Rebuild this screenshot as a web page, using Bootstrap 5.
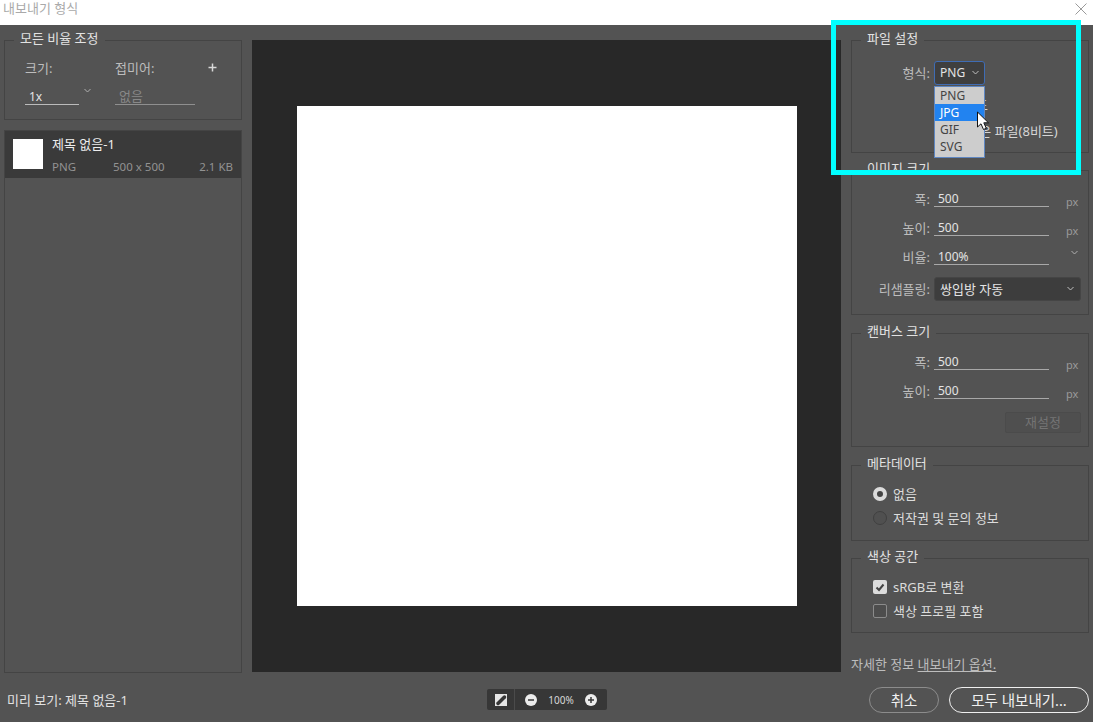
<!DOCTYPE html>
<html lang="ko">
<head>
<meta charset="utf-8">
<title>내보내기 형식</title>
<link href="https://cdn.jsdelivr.net/npm/bootstrap@5.3.0/dist/css/bootstrap.min.css" rel="stylesheet">
<style>
html,body{width:1093px;height:722px;overflow:hidden}
body{background:#535353;color:#d6d6d6;font-family:"Noto Sans","Noto Sans CJK KR",sans-serif;font-size:13px;line-height:18px}
.titlebar{height:25px;background:#fff;color:#a9a9a9;padding:0 3px;line-height:17px;font-size:13px}
.closex{margin:3px 3px 0 0}
.stage{position:relative;width:1093px;height:697px}
.mainrow{height:648px;padding:7px 4px 0}
.sidecol{width:238px;height:641px}
.viewport{width:589px;height:632px;margin:8px 10px 0;background:#282828}
.sheet{width:500px;height:500px;background:#fff}
.grp{border:1px solid #444;min-width:0}
.grp>legend{float:none;width:auto;font-size:13px;line-height:16px;padding:0 6px;margin:0 0 0 9px;color:#e2e2e2;position:relative;top:-2px}
.h-scale{height:88px}
.scale-body{padding-left:20px}
.h-file{height:121px}
.h-img{height:153px;margin-top:9px}
.h-canvas{height:122px;margin-top:10px}
.h-meta{height:84px;margin-top:10px}
.h-color{height:83px;margin-top:9px}
.flabel{width:78px;text-align:right;margin-right:4px;color:#bdbdbd;flex:none}
.frow{height:18px;margin-top:11px}
.frow .flabel{line-height:21px}
.fval{width:115px;border-bottom:1px solid #a8a8a8;padding-left:4px;color:#e4e4e4;height:18px;line-height:19px;flex:none;font-size:12px}
.funit{margin-left:17px;color:#9a9a9a;font-size:11px;position:relative;top:4px}
.chev{display:block;flex:none}
.chev-ratio{margin:3px 0 0 21px}
.selbox{width:147px;height:24px;background:#3d3d3d;border:1px solid #454545;border-radius:3px;padding:0 5px;color:#e4e4e4}
.fmt{width:51px;height:24px;background:#3f3f3f;border:1px solid #3f6cb4;border-radius:3px;padding:0 4px 0 5px;color:#e4e4e4;flex:none;font-size:12px}
.frow-top{margin-top:13px;height:24px}
.hidden-row{height:18px;margin:11px 0 0 100px;color:#d6d6d6}
.hidden-row+.hidden-row{margin-top:8px}
button.resetbtn:disabled{display:block;margin:13px 7px 0 auto;width:76px;height:21px;padding:0;line-height:19px;font-size:13px;background:#4f4f4f;border:1px solid #4b4b4b;border-radius:2px;color:#747474;opacity:1}
.optrow{height:20px;padding-left:21px;margin-top:4px;color:#dcdcdc}
.optrow.optfirst{margin-top:11px}
.radiodot{width:14px;height:14px;border-radius:50%;flex:none;margin-right:6px}
.radio-on{border:4px solid #dcdcdc;background:#444}
.radio-off{border:1px solid #404040;background:#505050}
.tick{width:14px;height:14px;border-radius:2px;flex:none;margin-right:6px}
.tick-on{background:#dcdcdc}
.tick-off{border:1px solid #8b8b8b;background:#4d4d4d}
.scale-first{width:90px;color:#bdbdbd;flex:none}
.scale-suffix{color:#bdbdbd}
.scale-a{margin-top:11px;height:18px}
.scale-b{margin-top:11px;height:17px}
.scale-x{width:54px;border-bottom:1px solid #bbb;padding-left:4px;height:17px;line-height:18px;color:#e4e4e4;flex:none;font-size:12px}
.scale-hint{width:80px;border-bottom:1px solid #8f8f8f;padding-left:4px;height:17px;line-height:16px;color:#888;flex:none}
.listpane{height:543px;margin-top:10px;border:1px solid #444}
.listitem{height:47px;background:#3a3a3a;padding:8px 8px 0 8px}
.thumb{width:30px;height:30px;background:#fff;flex:none;margin-right:9px}
.itemname{color:#eee;line-height:14px;margin-top:-2px}
.itemmeta{color:#929292;line-height:14px;margin-top:9px;font-size:11.500px}
.itemmeta span:nth-child(1){width:61px}
.itemmeta span:nth-child(2){flex:1}
.note{margin-top:23px;line-height:16px;color:#bdbdbd}
.note u{text-underline-offset:2px}
.bottombar{height:49px;padding:4px 4px 0 7px}
.previewname{width:480px;color:#e2e2e2;flex:none}
.zoombar{width:120px;height:21px;background:#373737;border-radius:2px;flex:none}
.zoomfit{width:28px;height:21px;border-right:1px solid #4b4b4b}
.zoomctl{padding:0 10px}
.zoompct{font-size:10px;color:#d8d8d8}
.pillbtn{height:26px;line-height:24px;padding:0;font-size:14.500px;background:transparent;border-radius:13px;color:#f0f0f0}
.pill-a{width:70px;border:1px solid #8c8c8c;margin-right:10px}
.pill-b{width:140px;border:1px solid #efefef}
.ddmenu{position:absolute;left:934px;top:61px;width:51px;height:72px;background:#cdcdcd;border:1px solid #5f87c2;color:#444;font-size:12px}
.ddmenu div{height:17px;line-height:17px;padding-left:5px}
.ddmenu .on{background:#2283f0;color:#fff}
.cursorico{position:absolute;left:976px;top:86px}
.marker{position:absolute;left:831px;top:-5px;width:250px;height:155px;border:5px solid #00ffff}
</style>
</head>
<body>
<header class="titlebar d-flex justify-content-between">
  <span>내보내기 형식</span>
  <svg class="closex" width="12" height="12" viewBox="0 0 12 12"><path d="M.5.5l11 11M11.500.5l-11 11" stroke="#9a9a9a" fill="none"/></svg>
</header>
<div class="stage">
  <div class="mainrow d-flex">
    <div class="sidecol">
      <fieldset class="grp h-scale">
        <legend>모든 비율 조정</legend>
        <div class="scale-body">
          <div class="d-flex scale-a">
            <div class="scale-first">크기:</div>
            <div class="flex-grow-1 scale-suffix">접미어:</div>
            <svg class="me-4 mt-1" width="9" height="9" viewBox="0 0 9 9"><path d="M4.500.5v8M.5 4.500h8" stroke="#d8d8d8" stroke-width="1.500"/></svg>
          </div>
          <div class="d-flex scale-b">
            <div class="d-flex scale-first">
              <div class="scale-x">1x</div>
              <svg class="chev ms-1" width="9" height="6" viewBox="0 0 9 6"><path d="M1.500 1l3 3 3-3" stroke="#b0b0b0" fill="none"/></svg>
            </div>
            <div class="scale-hint">없음</div>
          </div>
        </div>
      </fieldset>
      <div class="listpane">
        <div class="listitem d-flex">
          <div class="thumb"></div>
          <div class="flex-grow-1">
            <div class="itemname">제목 없음-1</div>
            <div class="itemmeta d-flex"><span>PNG</span><span>500 x 500</span><span>2.1 KB</span></div>
          </div>
        </div>
      </div>
    </div>
    <div class="viewport d-flex align-items-center justify-content-center">
      <div class="sheet"></div>
    </div>
    <div class="sidecol">
      <fieldset class="grp h-file">
        <legend>파일 설정</legend>
        <div class="d-flex frow-top align-items-center">
          <div class="flabel">형식:</div>
          <div class="fmt d-flex align-items-center justify-content-between">PNG
            <svg class="chev" width="9" height="6" viewBox="0 0 9 6"><path d="M1.500 1l3 3 3-3" stroke="#c0c0c0" fill="none"/></svg>
          </div>
        </div>
        <div class="hidden-row">투명도</div>
        <div class="hidden-row">더 작은 파일(8비트)</div>
      </fieldset>
      <fieldset class="grp h-img">
        <legend>이미지 크기</legend>
        <div class="d-flex frow"><div class="flabel">폭:</div><div class="fval">500</div><div class="funit">px</div></div>
        <div class="d-flex frow"><div class="flabel">높이:</div><div class="fval">500</div><div class="funit">px</div></div>
        <div class="d-flex frow"><div class="flabel">비율:</div><div class="fval">100%</div>
          <svg class="chev chev-ratio" width="9" height="6" viewBox="0 0 9 6"><path d="M1.500 1l3 3 3-3" stroke="#b0b0b0" fill="none"/></svg></div>
        <div class="d-flex align-items-center mt-2 pt-1">
          <div class="flabel">리샘플링:</div>
          <div class="selbox d-flex align-items-center justify-content-between">쌍입방 자동
            <svg class="chev" width="9" height="6" viewBox="0 0 9 6"><path d="M1.500 1l3 3 3-3" stroke="#c0c0c0" fill="none"/></svg>
          </div>
        </div>
      </fieldset>
      <fieldset class="grp h-canvas">
        <legend>캔버스 크기</legend>
        <div class="d-flex frow"><div class="flabel">폭:</div><div class="fval">500</div><div class="funit">px</div></div>
        <div class="d-flex frow"><div class="flabel">높이:</div><div class="fval">500</div><div class="funit">px</div></div>
        <button type="button" class="btn resetbtn" disabled>재설정</button>
      </fieldset>
      <fieldset class="grp h-meta">
        <legend>메타데이터</legend>
        <div class="d-flex align-items-center optrow optfirst"><span class="radiodot radio-on"></span>없음</div>
        <div class="d-flex align-items-center optrow"><span class="radiodot radio-off"></span>저작권 및 문의 정보</div>
      </fieldset>
      <fieldset class="grp h-color">
        <legend>색상 공간</legend>
        <div class="d-flex align-items-center optrow optfirst"><span class="tick tick-on d-flex align-items-center justify-content-center"><svg width="10" height="9" viewBox="0 0 10 9"><path d="M1.500 4.500l2.500 2.500 4.500-5.500" stroke="#444" stroke-width="2" fill="none"/></svg></span>sRGB로 변환</div>
        <div class="d-flex align-items-center optrow"><span class="tick tick-off"></span>색상 프로필 포함</div>
      </fieldset>
      <div class="note">자세한 정보 <u>내보내기 옵션.</u></div>
    </div>
  </div>
  <div class="bottombar d-flex align-items-center">
    <div class="previewname">미리 보기: 제목 없음-1</div>
    <div class="zoombar d-flex align-items-center">
      <div class="zoomfit d-flex align-items-center justify-content-center">
        <svg width="12" height="12" viewBox="0 0 12 12"><rect width="12" height="12" fill="#e6e6e6"/><rect x="1.500" y="1.500" width="9" height="9" fill="#e6e6e6"/><path d="M3 9.500L9.500 3" stroke="#373737" stroke-width="3.500" stroke-linecap="round"/></svg>
      </div>
      <div class="flex-grow-1 d-flex align-items-center justify-content-between zoomctl">
        <svg width="12" height="12" viewBox="0 0 12 12"><circle cx="6" cy="6" r="6" fill="#ececec"/><path d="M3 6h6" stroke="#373737" stroke-width="1.500"/></svg>
        <span class="zoompct">100%</span>
        <svg width="12" height="12" viewBox="0 0 12 12"><circle cx="6" cy="6" r="6" fill="#ececec"/><path d="M3 6h6M6 3v6" stroke="#373737" stroke-width="1.500"/></svg>
      </div>
    </div>
    <div class="ms-auto d-flex">
      <button type="button" class="btn pillbtn pill-a">취소</button>
      <button type="button" class="btn pillbtn pill-b">모두 내보내기...</button>
    </div>
  </div>
  <div class="ddmenu"><div>PNG</div><div class="on">JPG</div><div>GIF</div><div>SVG</div></div>
  <svg class="cursorico" width="14" height="20" viewBox="0 0 14 20"><path d="M1.500 1v15l3.500-3.200 2.500 5.700 2.800-1.200-2.500-5.500h4.700z" fill="#fff" stroke="#111" stroke-width="1"/></svg>
  <div class="marker"></div>
</div>
</body>
</html>
